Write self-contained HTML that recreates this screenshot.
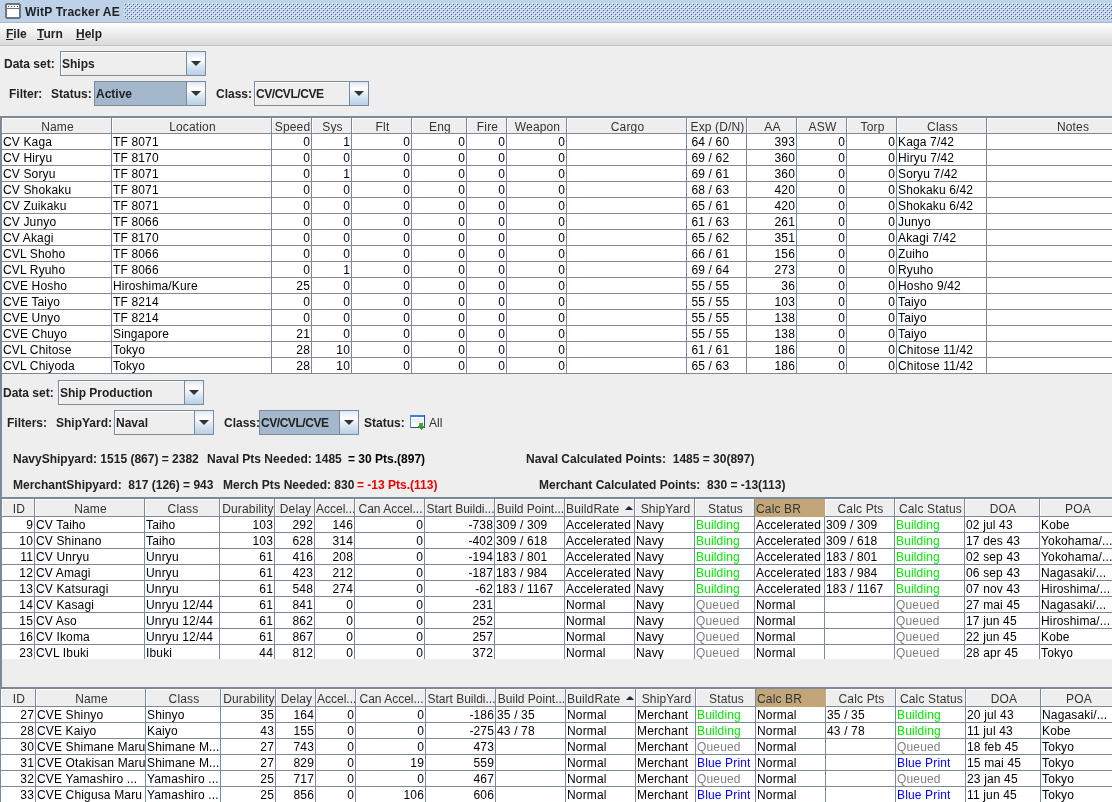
<!DOCTYPE html><html><head><meta charset="utf-8"><style>
*{margin:0;padding:0;box-sizing:content-box}
html,body{width:1112px;height:802px;overflow:hidden}
body{position:relative;background:#eeeeee;font-family:"Liberation Sans",sans-serif;font-size:12px;color:#000}
body div,body span{position:absolute;white-space:pre}
.clip{overflow:hidden}
#root{left:0;top:0;width:1112px;height:802px;will-change:transform}
#title{left:0;top:0;width:1112px;height:22px;background:#bdd1e9;border-bottom:1px solid #a9b9cc}
#title .tt{left:25px;top:2px;line-height:21px;letter-spacing:0.2px;font-weight:bold;color:#222;font-size:12px}
#title .ico{left:5px;top:3px;width:12px;height:12px;border:2px solid #6d7d8e;border-radius:2px;background:#fff}
#title .ico b{position:absolute;left:0;top:3px;width:12px;height:2px;background:#6d7d8e}
#title .bumps{left:124px;top:3px;width:988px;height:16px;background-image:radial-gradient(circle at 1.5px 1.5px,#5c6fa0 0.8px,transparent 1px),radial-gradient(circle at 3.5px 3.5px,#5c6fa0 0.8px,transparent 1px),radial-gradient(circle at 0.5px 0.5px,#fff 0.8px,transparent 1px),radial-gradient(circle at 2.5px 2.5px,#fff 0.8px,transparent 1px);background-size:4px 4px}
#menu{left:0;top:23px;width:1112px;height:22px;background:linear-gradient(#ffffff,#dadada);border-bottom:1px solid #c6c6c6}
#menu span{top:0px;line-height:23px;font-weight:bold;color:#222}
#menu u{text-decoration:underline}
.lb{font-weight:bold;color:#222;line-height:25px;padding-top:1px}
.lbn{color:#333;padding-top:1px}
.lb2{font-weight:bold;color:#222;line-height:14px;padding-top:1px}
.cb{border:1px solid #7a8a99;box-shadow:inset 1px 1px 0 #fff}
.cbt{left:1px;top:1px;line-height:23px;font-weight:bold;color:#222}
.cba{right:0;top:0;bottom:0;border-left:1px solid #7a8a99;background:linear-gradient(#dde8f3 0%,#ffffff 30%,#dde8f3 60%,#b8cfe5 100%)}
.cba i{position:absolute;left:4px;top:9px;width:0;height:0;border-left:5px solid transparent;border-right:5px solid transparent;border-top:5px solid #333}
.hd{color:#333;top:0;letter-spacing:0.15px}
.hd.c{text-align:center}
.td{line-height:15px;height:15px;letter-spacing:0.15px;overflow:hidden}
.sort{width:0;height:0;border-left:4px solid transparent;border-right:4px solid transparent;border-bottom:4px solid #1d2b3e}
.sico{width:13px;height:13px;border:1px solid #6a8ccf;background:linear-gradient(#c9daf0 0,#c9daf0 3px,#f6f9fd 3px)}
</style></head><body><div id="root"><div id="title"><svg width="16" height="16" style="position:absolute;left:5px;top:3px" shape-rendering="crispEdges"><path fill="#6b7584" d="M1 0h14v1h1v14h-1v1H1v-1H0V1h1z"/><rect x="2" y="2" width="12" height="12" fill="#fff"/><rect x="2" y="5" width="12" height="1" fill="#6b7584"/><rect x="3" y="3" width="1" height="1" fill="#555"/><rect x="6" y="3" width="1" height="1" fill="#555"/><rect x="9" y="3" width="1" height="1" fill="#555"/><rect x="12" y="3" width="1" height="1" fill="#555"/></svg><span class="tt">WitP Tracker AE</span><svg width="988" height="16" style="position:absolute;left:124px;top:3px" shape-rendering="crispEdges"><defs><pattern id="bp" width="4" height="4" patternUnits="userSpaceOnUse"><rect x="0" y="0" width="1" height="1" fill="#fff"/><rect x="2" y="2" width="1" height="1" fill="#fff"/><rect x="1" y="1" width="1" height="1" fill="#4f5f7a"/><rect x="3" y="3" width="1" height="1" fill="#4f5f7a"/></pattern><pattern id="bp2" width="4" height="4" patternUnits="userSpaceOnUse"><rect x="0" y="0" width="1" height="1" fill="#fff"/><rect x="2" y="2" width="1" height="1" fill="#fff"/><rect x="1" y="1" width="1" height="1" fill="#5560c0"/><rect x="3" y="3" width="1" height="1" fill="#5560c0"/></pattern></defs><rect width="988" height="16" fill="url(#bp)"/><rect x="4" y="4" width="984" height="8" fill="url(#bp2)"/></svg></div>
<div id="menu"><span style="left:6px"><u>F</u>ile</span><span style="left:37px"><u>T</u>urn</span><span style="left:76px"><u>H</u>elp</span></div>
<span class="lb" style="left:4px;top:51px;">Data set:</span>
<div class="cb" style="left:60px;top:51px;width:144px;height:23px;background:#eeeeee;"><span class="cbt" style="">Ships</span><div class="cba" style="width:18px"><i></i></div></div>
<span class="lb" style="left:9px;top:81px;">Filter:</span>
<span class="lb" style="left:51px;top:81px;">Status:</span>
<div class="cb" style="left:94px;top:81px;width:110px;height:23px;background:#a3b8cc;box-shadow:none"><span class="cbt" style="">Active</span><div class="cba" style="width:18px"><i></i></div></div>
<span class="lb" style="left:216px;top:81px;">Class:</span>
<div class="cb" style="left:254px;top:81px;width:113px;height:23px;background:#eeeeee;"><span class="cbt" style="letter-spacing:-0.45px">CV/CVL/CVE</span><div class="cba" style="width:18px"><i></i></div></div>
<div style="left:0px;top:116px;width:2px;height:571px;background:#7a8a99"></div>
<div style="left:0px;top:687px;width:1px;height:115px;background:#7a8a99"></div>
<div style="left:0px;top:116px;width:1112px;height:2px;background:#7a8a99"></div>
<div style="left:2px;top:118px;width:1110px;height:16px;background:#eeeeee"></div>
<div style="left:2px;top:118px;width:109px;height:1px;background:#fff"></div>
<div style="left:2px;top:118px;width:1px;height:15px;background:#fff"></div>
<span class="hd c" style="left:3px;width:109px;top:120px;height:15px;line-height:15px">Name</span>
<div style="left:111px;top:118px;width:1px;height:16px;background:#7a8a99"></div>
<div style="left:112px;top:118px;width:159px;height:1px;background:#fff"></div>
<div style="left:112px;top:118px;width:1px;height:15px;background:#fff"></div>
<span class="hd c" style="left:113px;width:159px;top:120px;height:15px;line-height:15px">Location</span>
<div style="left:271px;top:118px;width:1px;height:16px;background:#7a8a99"></div>
<div style="left:272px;top:118px;width:39px;height:1px;background:#fff"></div>
<div style="left:272px;top:118px;width:1px;height:15px;background:#fff"></div>
<span class="hd c" style="left:273px;width:39px;top:120px;height:15px;line-height:15px">Speed</span>
<div style="left:311px;top:118px;width:1px;height:16px;background:#7a8a99"></div>
<div style="left:312px;top:118px;width:39px;height:1px;background:#fff"></div>
<div style="left:312px;top:118px;width:1px;height:15px;background:#fff"></div>
<span class="hd c" style="left:313px;width:39px;top:120px;height:15px;line-height:15px">Sys</span>
<div style="left:351px;top:118px;width:1px;height:16px;background:#7a8a99"></div>
<div style="left:352px;top:118px;width:59px;height:1px;background:#fff"></div>
<div style="left:352px;top:118px;width:1px;height:15px;background:#fff"></div>
<span class="hd c" style="left:353px;width:59px;top:120px;height:15px;line-height:15px">Flt</span>
<div style="left:411px;top:118px;width:1px;height:16px;background:#7a8a99"></div>
<div style="left:412px;top:118px;width:54px;height:1px;background:#fff"></div>
<div style="left:412px;top:118px;width:1px;height:15px;background:#fff"></div>
<span class="hd c" style="left:413px;width:54px;top:120px;height:15px;line-height:15px">Eng</span>
<div style="left:466px;top:118px;width:1px;height:16px;background:#7a8a99"></div>
<div style="left:467px;top:118px;width:39px;height:1px;background:#fff"></div>
<div style="left:467px;top:118px;width:1px;height:15px;background:#fff"></div>
<span class="hd c" style="left:468px;width:39px;top:120px;height:15px;line-height:15px">Fire</span>
<div style="left:506px;top:118px;width:1px;height:16px;background:#7a8a99"></div>
<div style="left:507px;top:118px;width:59px;height:1px;background:#fff"></div>
<div style="left:507px;top:118px;width:1px;height:15px;background:#fff"></div>
<span class="hd c" style="left:508px;width:59px;top:120px;height:15px;line-height:15px">Weapon</span>
<div style="left:566px;top:118px;width:1px;height:16px;background:#7a8a99"></div>
<div style="left:567px;top:118px;width:119px;height:1px;background:#fff"></div>
<div style="left:567px;top:118px;width:1px;height:15px;background:#fff"></div>
<span class="hd c" style="left:568px;width:119px;top:120px;height:15px;line-height:15px">Cargo</span>
<div style="left:686px;top:118px;width:1px;height:16px;background:#7a8a99"></div>
<div style="left:687px;top:118px;width:59px;height:1px;background:#fff"></div>
<div style="left:687px;top:118px;width:1px;height:15px;background:#fff"></div>
<span class="hd c" style="left:688px;width:59px;top:120px;height:15px;line-height:15px">Exp (D/N)</span>
<div style="left:746px;top:118px;width:1px;height:16px;background:#7a8a99"></div>
<div style="left:747px;top:118px;width:49px;height:1px;background:#fff"></div>
<div style="left:747px;top:118px;width:1px;height:15px;background:#fff"></div>
<span class="hd c" style="left:748px;width:49px;top:120px;height:15px;line-height:15px">AA</span>
<div style="left:796px;top:118px;width:1px;height:16px;background:#7a8a99"></div>
<div style="left:797px;top:118px;width:49px;height:1px;background:#fff"></div>
<div style="left:797px;top:118px;width:1px;height:15px;background:#fff"></div>
<span class="hd c" style="left:798px;width:49px;top:120px;height:15px;line-height:15px">ASW</span>
<div style="left:846px;top:118px;width:1px;height:16px;background:#7a8a99"></div>
<div style="left:847px;top:118px;width:49px;height:1px;background:#fff"></div>
<div style="left:847px;top:118px;width:1px;height:15px;background:#fff"></div>
<span class="hd c" style="left:848px;width:49px;top:120px;height:15px;line-height:15px">Torp</span>
<div style="left:896px;top:118px;width:1px;height:16px;background:#7a8a99"></div>
<div style="left:897px;top:118px;width:89px;height:1px;background:#fff"></div>
<div style="left:897px;top:118px;width:1px;height:15px;background:#fff"></div>
<span class="hd c" style="left:898px;width:89px;top:120px;height:15px;line-height:15px">Class</span>
<div style="left:986px;top:118px;width:1px;height:16px;background:#7a8a99"></div>
<div style="left:987px;top:118px;width:170px;height:1px;background:#fff"></div>
<div style="left:987px;top:118px;width:1px;height:15px;background:#fff"></div>
<span class="hd c" style="left:988px;width:170px;top:120px;height:15px;line-height:15px">Notes</span>
<div style="left:2px;top:133px;width:1110px;height:1px;background:#7a8a99"></div>
<div style="left:2px;top:134px;width:1110px;height:240px;background:#fff"></div>
<div class="clip" style="left:0;top:134px;width:1112px;height:240px">
<span class="td" style="left:3px;width:108px;top:1px;">CV Kaga</span>
<span class="td" style="left:113px;width:158px;top:1px;">TF 8071</span>
<span class="td" style="left:272px;width:38px;text-align:right;top:1px;">0</span>
<span class="td" style="left:312px;width:38px;text-align:right;top:1px;">1</span>
<span class="td" style="left:352px;width:58px;text-align:right;top:1px;">0</span>
<span class="td" style="left:412px;width:53px;text-align:right;top:1px;">0</span>
<span class="td" style="left:467px;width:38px;text-align:right;top:1px;">0</span>
<span class="td" style="left:507px;width:58px;text-align:right;top:1px;">0</span>
<span class="td" style="left:688px;width:58px;top:1px;"> 64 / 60</span>
<span class="td" style="left:747px;width:48px;text-align:right;top:1px;">393</span>
<span class="td" style="left:797px;width:48px;text-align:right;top:1px;">0</span>
<span class="td" style="left:847px;width:48px;text-align:right;top:1px;">0</span>
<span class="td" style="left:898px;width:88px;top:1px;">Kaga 7/42</span>
<div style="left:2px;top:15px;width:1110px;height:1px;background:#7a8a99"></div>
<span class="td" style="left:3px;width:108px;top:17px;">CV Hiryu</span>
<span class="td" style="left:113px;width:158px;top:17px;">TF 8170</span>
<span class="td" style="left:272px;width:38px;text-align:right;top:17px;">0</span>
<span class="td" style="left:312px;width:38px;text-align:right;top:17px;">0</span>
<span class="td" style="left:352px;width:58px;text-align:right;top:17px;">0</span>
<span class="td" style="left:412px;width:53px;text-align:right;top:17px;">0</span>
<span class="td" style="left:467px;width:38px;text-align:right;top:17px;">0</span>
<span class="td" style="left:507px;width:58px;text-align:right;top:17px;">0</span>
<span class="td" style="left:688px;width:58px;top:17px;"> 69 / 62</span>
<span class="td" style="left:747px;width:48px;text-align:right;top:17px;">360</span>
<span class="td" style="left:797px;width:48px;text-align:right;top:17px;">0</span>
<span class="td" style="left:847px;width:48px;text-align:right;top:17px;">0</span>
<span class="td" style="left:898px;width:88px;top:17px;">Hiryu 7/42</span>
<div style="left:2px;top:31px;width:1110px;height:1px;background:#7a8a99"></div>
<span class="td" style="left:3px;width:108px;top:33px;">CV Soryu</span>
<span class="td" style="left:113px;width:158px;top:33px;">TF 8071</span>
<span class="td" style="left:272px;width:38px;text-align:right;top:33px;">0</span>
<span class="td" style="left:312px;width:38px;text-align:right;top:33px;">1</span>
<span class="td" style="left:352px;width:58px;text-align:right;top:33px;">0</span>
<span class="td" style="left:412px;width:53px;text-align:right;top:33px;">0</span>
<span class="td" style="left:467px;width:38px;text-align:right;top:33px;">0</span>
<span class="td" style="left:507px;width:58px;text-align:right;top:33px;">0</span>
<span class="td" style="left:688px;width:58px;top:33px;"> 69 / 61</span>
<span class="td" style="left:747px;width:48px;text-align:right;top:33px;">360</span>
<span class="td" style="left:797px;width:48px;text-align:right;top:33px;">0</span>
<span class="td" style="left:847px;width:48px;text-align:right;top:33px;">0</span>
<span class="td" style="left:898px;width:88px;top:33px;">Soryu 7/42</span>
<div style="left:2px;top:47px;width:1110px;height:1px;background:#7a8a99"></div>
<span class="td" style="left:3px;width:108px;top:49px;">CV Shokaku</span>
<span class="td" style="left:113px;width:158px;top:49px;">TF 8071</span>
<span class="td" style="left:272px;width:38px;text-align:right;top:49px;">0</span>
<span class="td" style="left:312px;width:38px;text-align:right;top:49px;">0</span>
<span class="td" style="left:352px;width:58px;text-align:right;top:49px;">0</span>
<span class="td" style="left:412px;width:53px;text-align:right;top:49px;">0</span>
<span class="td" style="left:467px;width:38px;text-align:right;top:49px;">0</span>
<span class="td" style="left:507px;width:58px;text-align:right;top:49px;">0</span>
<span class="td" style="left:688px;width:58px;top:49px;"> 68 / 63</span>
<span class="td" style="left:747px;width:48px;text-align:right;top:49px;">420</span>
<span class="td" style="left:797px;width:48px;text-align:right;top:49px;">0</span>
<span class="td" style="left:847px;width:48px;text-align:right;top:49px;">0</span>
<span class="td" style="left:898px;width:88px;top:49px;">Shokaku 6/42</span>
<div style="left:2px;top:63px;width:1110px;height:1px;background:#7a8a99"></div>
<span class="td" style="left:3px;width:108px;top:65px;">CV Zuikaku</span>
<span class="td" style="left:113px;width:158px;top:65px;">TF 8071</span>
<span class="td" style="left:272px;width:38px;text-align:right;top:65px;">0</span>
<span class="td" style="left:312px;width:38px;text-align:right;top:65px;">0</span>
<span class="td" style="left:352px;width:58px;text-align:right;top:65px;">0</span>
<span class="td" style="left:412px;width:53px;text-align:right;top:65px;">0</span>
<span class="td" style="left:467px;width:38px;text-align:right;top:65px;">0</span>
<span class="td" style="left:507px;width:58px;text-align:right;top:65px;">0</span>
<span class="td" style="left:688px;width:58px;top:65px;"> 65 / 61</span>
<span class="td" style="left:747px;width:48px;text-align:right;top:65px;">420</span>
<span class="td" style="left:797px;width:48px;text-align:right;top:65px;">0</span>
<span class="td" style="left:847px;width:48px;text-align:right;top:65px;">0</span>
<span class="td" style="left:898px;width:88px;top:65px;">Shokaku 6/42</span>
<div style="left:2px;top:79px;width:1110px;height:1px;background:#7a8a99"></div>
<span class="td" style="left:3px;width:108px;top:81px;">CV Junyo</span>
<span class="td" style="left:113px;width:158px;top:81px;">TF 8066</span>
<span class="td" style="left:272px;width:38px;text-align:right;top:81px;">0</span>
<span class="td" style="left:312px;width:38px;text-align:right;top:81px;">0</span>
<span class="td" style="left:352px;width:58px;text-align:right;top:81px;">0</span>
<span class="td" style="left:412px;width:53px;text-align:right;top:81px;">0</span>
<span class="td" style="left:467px;width:38px;text-align:right;top:81px;">0</span>
<span class="td" style="left:507px;width:58px;text-align:right;top:81px;">0</span>
<span class="td" style="left:688px;width:58px;top:81px;"> 61 / 63</span>
<span class="td" style="left:747px;width:48px;text-align:right;top:81px;">261</span>
<span class="td" style="left:797px;width:48px;text-align:right;top:81px;">0</span>
<span class="td" style="left:847px;width:48px;text-align:right;top:81px;">0</span>
<span class="td" style="left:898px;width:88px;top:81px;">Junyo</span>
<div style="left:2px;top:95px;width:1110px;height:1px;background:#7a8a99"></div>
<span class="td" style="left:3px;width:108px;top:97px;">CV Akagi</span>
<span class="td" style="left:113px;width:158px;top:97px;">TF 8170</span>
<span class="td" style="left:272px;width:38px;text-align:right;top:97px;">0</span>
<span class="td" style="left:312px;width:38px;text-align:right;top:97px;">0</span>
<span class="td" style="left:352px;width:58px;text-align:right;top:97px;">0</span>
<span class="td" style="left:412px;width:53px;text-align:right;top:97px;">0</span>
<span class="td" style="left:467px;width:38px;text-align:right;top:97px;">0</span>
<span class="td" style="left:507px;width:58px;text-align:right;top:97px;">0</span>
<span class="td" style="left:688px;width:58px;top:97px;"> 65 / 62</span>
<span class="td" style="left:747px;width:48px;text-align:right;top:97px;">351</span>
<span class="td" style="left:797px;width:48px;text-align:right;top:97px;">0</span>
<span class="td" style="left:847px;width:48px;text-align:right;top:97px;">0</span>
<span class="td" style="left:898px;width:88px;top:97px;">Akagi 7/42</span>
<div style="left:2px;top:111px;width:1110px;height:1px;background:#7a8a99"></div>
<span class="td" style="left:3px;width:108px;top:113px;">CVL Shoho</span>
<span class="td" style="left:113px;width:158px;top:113px;">TF 8066</span>
<span class="td" style="left:272px;width:38px;text-align:right;top:113px;">0</span>
<span class="td" style="left:312px;width:38px;text-align:right;top:113px;">0</span>
<span class="td" style="left:352px;width:58px;text-align:right;top:113px;">0</span>
<span class="td" style="left:412px;width:53px;text-align:right;top:113px;">0</span>
<span class="td" style="left:467px;width:38px;text-align:right;top:113px;">0</span>
<span class="td" style="left:507px;width:58px;text-align:right;top:113px;">0</span>
<span class="td" style="left:688px;width:58px;top:113px;"> 66 / 61</span>
<span class="td" style="left:747px;width:48px;text-align:right;top:113px;">156</span>
<span class="td" style="left:797px;width:48px;text-align:right;top:113px;">0</span>
<span class="td" style="left:847px;width:48px;text-align:right;top:113px;">0</span>
<span class="td" style="left:898px;width:88px;top:113px;">Zuiho</span>
<div style="left:2px;top:127px;width:1110px;height:1px;background:#7a8a99"></div>
<span class="td" style="left:3px;width:108px;top:129px;">CVL Ryuho</span>
<span class="td" style="left:113px;width:158px;top:129px;">TF 8066</span>
<span class="td" style="left:272px;width:38px;text-align:right;top:129px;">0</span>
<span class="td" style="left:312px;width:38px;text-align:right;top:129px;">1</span>
<span class="td" style="left:352px;width:58px;text-align:right;top:129px;">0</span>
<span class="td" style="left:412px;width:53px;text-align:right;top:129px;">0</span>
<span class="td" style="left:467px;width:38px;text-align:right;top:129px;">0</span>
<span class="td" style="left:507px;width:58px;text-align:right;top:129px;">0</span>
<span class="td" style="left:688px;width:58px;top:129px;"> 69 / 64</span>
<span class="td" style="left:747px;width:48px;text-align:right;top:129px;">273</span>
<span class="td" style="left:797px;width:48px;text-align:right;top:129px;">0</span>
<span class="td" style="left:847px;width:48px;text-align:right;top:129px;">0</span>
<span class="td" style="left:898px;width:88px;top:129px;">Ryuho</span>
<div style="left:2px;top:143px;width:1110px;height:1px;background:#7a8a99"></div>
<span class="td" style="left:3px;width:108px;top:145px;">CVE Hosho</span>
<span class="td" style="left:113px;width:158px;top:145px;">Hiroshima/Kure</span>
<span class="td" style="left:272px;width:38px;text-align:right;top:145px;">25</span>
<span class="td" style="left:312px;width:38px;text-align:right;top:145px;">0</span>
<span class="td" style="left:352px;width:58px;text-align:right;top:145px;">0</span>
<span class="td" style="left:412px;width:53px;text-align:right;top:145px;">0</span>
<span class="td" style="left:467px;width:38px;text-align:right;top:145px;">0</span>
<span class="td" style="left:507px;width:58px;text-align:right;top:145px;">0</span>
<span class="td" style="left:688px;width:58px;top:145px;"> 55 / 55</span>
<span class="td" style="left:747px;width:48px;text-align:right;top:145px;">36</span>
<span class="td" style="left:797px;width:48px;text-align:right;top:145px;">0</span>
<span class="td" style="left:847px;width:48px;text-align:right;top:145px;">0</span>
<span class="td" style="left:898px;width:88px;top:145px;">Hosho 9/42</span>
<div style="left:2px;top:159px;width:1110px;height:1px;background:#7a8a99"></div>
<span class="td" style="left:3px;width:108px;top:161px;">CVE Taiyo</span>
<span class="td" style="left:113px;width:158px;top:161px;">TF 8214</span>
<span class="td" style="left:272px;width:38px;text-align:right;top:161px;">0</span>
<span class="td" style="left:312px;width:38px;text-align:right;top:161px;">0</span>
<span class="td" style="left:352px;width:58px;text-align:right;top:161px;">0</span>
<span class="td" style="left:412px;width:53px;text-align:right;top:161px;">0</span>
<span class="td" style="left:467px;width:38px;text-align:right;top:161px;">0</span>
<span class="td" style="left:507px;width:58px;text-align:right;top:161px;">0</span>
<span class="td" style="left:688px;width:58px;top:161px;"> 55 / 55</span>
<span class="td" style="left:747px;width:48px;text-align:right;top:161px;">103</span>
<span class="td" style="left:797px;width:48px;text-align:right;top:161px;">0</span>
<span class="td" style="left:847px;width:48px;text-align:right;top:161px;">0</span>
<span class="td" style="left:898px;width:88px;top:161px;">Taiyo</span>
<div style="left:2px;top:175px;width:1110px;height:1px;background:#7a8a99"></div>
<span class="td" style="left:3px;width:108px;top:177px;">CVE Unyo</span>
<span class="td" style="left:113px;width:158px;top:177px;">TF 8214</span>
<span class="td" style="left:272px;width:38px;text-align:right;top:177px;">0</span>
<span class="td" style="left:312px;width:38px;text-align:right;top:177px;">0</span>
<span class="td" style="left:352px;width:58px;text-align:right;top:177px;">0</span>
<span class="td" style="left:412px;width:53px;text-align:right;top:177px;">0</span>
<span class="td" style="left:467px;width:38px;text-align:right;top:177px;">0</span>
<span class="td" style="left:507px;width:58px;text-align:right;top:177px;">0</span>
<span class="td" style="left:688px;width:58px;top:177px;"> 55 / 55</span>
<span class="td" style="left:747px;width:48px;text-align:right;top:177px;">138</span>
<span class="td" style="left:797px;width:48px;text-align:right;top:177px;">0</span>
<span class="td" style="left:847px;width:48px;text-align:right;top:177px;">0</span>
<span class="td" style="left:898px;width:88px;top:177px;">Taiyo</span>
<div style="left:2px;top:191px;width:1110px;height:1px;background:#7a8a99"></div>
<span class="td" style="left:3px;width:108px;top:193px;">CVE Chuyo</span>
<span class="td" style="left:113px;width:158px;top:193px;">Singapore</span>
<span class="td" style="left:272px;width:38px;text-align:right;top:193px;">21</span>
<span class="td" style="left:312px;width:38px;text-align:right;top:193px;">0</span>
<span class="td" style="left:352px;width:58px;text-align:right;top:193px;">0</span>
<span class="td" style="left:412px;width:53px;text-align:right;top:193px;">0</span>
<span class="td" style="left:467px;width:38px;text-align:right;top:193px;">0</span>
<span class="td" style="left:507px;width:58px;text-align:right;top:193px;">0</span>
<span class="td" style="left:688px;width:58px;top:193px;"> 55 / 55</span>
<span class="td" style="left:747px;width:48px;text-align:right;top:193px;">138</span>
<span class="td" style="left:797px;width:48px;text-align:right;top:193px;">0</span>
<span class="td" style="left:847px;width:48px;text-align:right;top:193px;">0</span>
<span class="td" style="left:898px;width:88px;top:193px;">Taiyo</span>
<div style="left:2px;top:207px;width:1110px;height:1px;background:#7a8a99"></div>
<span class="td" style="left:3px;width:108px;top:209px;">CVL Chitose</span>
<span class="td" style="left:113px;width:158px;top:209px;">Tokyo</span>
<span class="td" style="left:272px;width:38px;text-align:right;top:209px;">28</span>
<span class="td" style="left:312px;width:38px;text-align:right;top:209px;">10</span>
<span class="td" style="left:352px;width:58px;text-align:right;top:209px;">0</span>
<span class="td" style="left:412px;width:53px;text-align:right;top:209px;">0</span>
<span class="td" style="left:467px;width:38px;text-align:right;top:209px;">0</span>
<span class="td" style="left:507px;width:58px;text-align:right;top:209px;">0</span>
<span class="td" style="left:688px;width:58px;top:209px;"> 61 / 61</span>
<span class="td" style="left:747px;width:48px;text-align:right;top:209px;">186</span>
<span class="td" style="left:797px;width:48px;text-align:right;top:209px;">0</span>
<span class="td" style="left:847px;width:48px;text-align:right;top:209px;">0</span>
<span class="td" style="left:898px;width:88px;top:209px;">Chitose 11/42</span>
<div style="left:2px;top:223px;width:1110px;height:1px;background:#7a8a99"></div>
<span class="td" style="left:3px;width:108px;top:225px;">CVL Chiyoda</span>
<span class="td" style="left:113px;width:158px;top:225px;">Tokyo</span>
<span class="td" style="left:272px;width:38px;text-align:right;top:225px;">28</span>
<span class="td" style="left:312px;width:38px;text-align:right;top:225px;">10</span>
<span class="td" style="left:352px;width:58px;text-align:right;top:225px;">0</span>
<span class="td" style="left:412px;width:53px;text-align:right;top:225px;">0</span>
<span class="td" style="left:467px;width:38px;text-align:right;top:225px;">0</span>
<span class="td" style="left:507px;width:58px;text-align:right;top:225px;">0</span>
<span class="td" style="left:688px;width:58px;top:225px;"> 65 / 63</span>
<span class="td" style="left:747px;width:48px;text-align:right;top:225px;">186</span>
<span class="td" style="left:797px;width:48px;text-align:right;top:225px;">0</span>
<span class="td" style="left:847px;width:48px;text-align:right;top:225px;">0</span>
<span class="td" style="left:898px;width:88px;top:225px;">Chitose 11/42</span>
<div style="left:2px;top:239px;width:1110px;height:1px;background:#7a8a99"></div>
<div style="left:111px;top:0;width:1px;height:240px;background:#7a8a99"></div>
<div style="left:271px;top:0;width:1px;height:240px;background:#7a8a99"></div>
<div style="left:311px;top:0;width:1px;height:240px;background:#7a8a99"></div>
<div style="left:351px;top:0;width:1px;height:240px;background:#7a8a99"></div>
<div style="left:411px;top:0;width:1px;height:240px;background:#7a8a99"></div>
<div style="left:466px;top:0;width:1px;height:240px;background:#7a8a99"></div>
<div style="left:506px;top:0;width:1px;height:240px;background:#7a8a99"></div>
<div style="left:566px;top:0;width:1px;height:240px;background:#7a8a99"></div>
<div style="left:686px;top:0;width:1px;height:240px;background:#7a8a99"></div>
<div style="left:746px;top:0;width:1px;height:240px;background:#7a8a99"></div>
<div style="left:796px;top:0;width:1px;height:240px;background:#7a8a99"></div>
<div style="left:846px;top:0;width:1px;height:240px;background:#7a8a99"></div>
<div style="left:896px;top:0;width:1px;height:240px;background:#7a8a99"></div>
<div style="left:986px;top:0;width:1px;height:240px;background:#7a8a99"></div>
</div>
<span class="lb" style="left:3px;top:380px;">Data set:</span>
<div class="cb" style="left:58px;top:380px;width:144px;height:23px;background:#eeeeee;"><span class="cbt" style="">Ship Production</span><div class="cba" style="width:18px"><i></i></div></div>
<span class="lb" style="left:7px;top:410px;">Filters:</span>
<span class="lb" style="left:56px;top:410px;">ShipYard:</span>
<div class="cb" style="left:114px;top:410px;width:98px;height:23px;background:#eeeeee;"><span class="cbt" style="">Naval</span><div class="cba" style="width:18px"><i></i></div></div>
<span class="lb" style="left:224px;top:410px;">Class:</span>
<div class="cb" style="left:259px;top:410px;width:98px;height:23px;background:#a3b8cc;box-shadow:none"><span class="cbt" style="letter-spacing:-0.45px">CV/CVL/CVE</span><div class="cba" style="width:18px"><i></i></div></div>
<span class="lb" style="left:364px;top:410px;">Status:</span>
<svg width="16" height="16" style="position:absolute;left:410px;top:415px" shape-rendering="crispEdges"><rect x="0" y="0" width="15" height="13" fill="#2c4a9a"/><rect x="0" y="0" width="14" height="2" fill="#4a7ae0"/><rect x="0" y="2" width="1" height="11" fill="#5a86dc"/><rect x="1" y="2" width="13" height="10" fill="#fbfdff"/><rect x="2" y="4" width="11" height="1" fill="#dde6f0"/><rect x="2" y="6" width="11" height="1" fill="#f0e0d8"/><rect x="9" y="8" width="4" height="4" fill="#4caa32"/><path d="M7 11h8l-4 4z" fill="#3a9a28"/></svg>
<span class="lbn" style="left:429px;top:410px;line-height:25px">All</span>
<span class="lb2" style="left:13px;top:451px">NavyShipyard: 1515 (867) = 2382</span>
<span class="lb2" style="left:207px;top:451px">Naval Pts Needed: 1485</span>
<span class="lb2" style="left:348px;top:451px;color:#000">= 30 Pts.(897)</span>
<span class="lb2" style="left:526px;top:451px">Naval Calculated Points:&nbsp; 1485 = 30(897)</span>
<span class="lb2" style="left:13px;top:477px">MerchantShipyard:&nbsp; 817 (126) = 943</span>
<span class="lb2" style="left:223px;top:477px">Merch Pts Needed: 830</span>
<span class="lb2" style="left:357px;top:477px;color:#f00000">= -13 Pts.(113)</span>
<span class="lb2" style="left:539px;top:477px">Merchant Calculated Points:&nbsp; 830 = -13(113)</span>
<div style="left:0px;top:497px;width:1112px;height:2px;background:#7a8a99"></div>
<div style="left:2px;top:499px;width:1110px;height:18px;background:#eeeeee"></div>
<div style="left:2px;top:499px;width:32px;height:1px;background:#fff"></div>
<div style="left:2px;top:499px;width:1px;height:17px;background:#fff"></div>
<span class="hd c" style="left:3px;width:32px;top:501px;height:17px;line-height:17px">ID</span>
<div style="left:34px;top:499px;width:1px;height:18px;background:#7a8a99"></div>
<div style="left:35px;top:499px;width:109px;height:1px;background:#fff"></div>
<div style="left:35px;top:499px;width:1px;height:17px;background:#fff"></div>
<span class="hd c" style="left:36px;width:109px;top:501px;height:17px;line-height:17px">Name</span>
<div style="left:144px;top:499px;width:1px;height:18px;background:#7a8a99"></div>
<div style="left:145px;top:499px;width:74px;height:1px;background:#fff"></div>
<div style="left:145px;top:499px;width:1px;height:17px;background:#fff"></div>
<span class="hd c" style="left:146px;width:74px;top:501px;height:17px;line-height:17px">Class</span>
<div style="left:219px;top:499px;width:1px;height:18px;background:#7a8a99"></div>
<div style="left:220px;top:499px;width:54px;height:1px;background:#fff"></div>
<div style="left:220px;top:499px;width:1px;height:17px;background:#fff"></div>
<span class="hd c" style="left:221px;width:54px;top:501px;height:17px;line-height:17px">Durability</span>
<div style="left:274px;top:499px;width:1px;height:18px;background:#7a8a99"></div>
<div style="left:275px;top:499px;width:39px;height:1px;background:#fff"></div>
<div style="left:275px;top:499px;width:1px;height:17px;background:#fff"></div>
<span class="hd c" style="left:276px;width:39px;top:501px;height:17px;line-height:17px">Delay</span>
<div style="left:314px;top:499px;width:1px;height:18px;background:#7a8a99"></div>
<div style="left:315px;top:499px;width:39px;height:1px;background:#fff"></div>
<div style="left:315px;top:499px;width:1px;height:17px;background:#fff"></div>
<span class="hd c" style="letter-spacing:0;left:316px;width:39px;top:501px;height:17px;line-height:17px">Accel...</span>
<div style="left:354px;top:499px;width:1px;height:18px;background:#7a8a99"></div>
<div style="left:355px;top:499px;width:69px;height:1px;background:#fff"></div>
<div style="left:355px;top:499px;width:1px;height:17px;background:#fff"></div>
<span class="hd c" style="letter-spacing:0;left:356px;width:69px;top:501px;height:17px;line-height:17px">Can Accel...</span>
<div style="left:424px;top:499px;width:1px;height:18px;background:#7a8a99"></div>
<div style="left:425px;top:499px;width:69px;height:1px;background:#fff"></div>
<div style="left:425px;top:499px;width:1px;height:17px;background:#fff"></div>
<span class="hd c" style="letter-spacing:0;left:426px;width:69px;top:501px;height:17px;line-height:17px">Start Buildi...</span>
<div style="left:494px;top:499px;width:1px;height:18px;background:#7a8a99"></div>
<div style="left:495px;top:499px;width:69px;height:1px;background:#fff"></div>
<div style="left:495px;top:499px;width:1px;height:17px;background:#fff"></div>
<span class="hd c" style="letter-spacing:0;left:496px;width:69px;top:501px;height:17px;line-height:17px">Build Point...</span>
<div style="left:564px;top:499px;width:1px;height:18px;background:#7a8a99"></div>
<div style="left:565px;top:499px;width:69px;height:1px;background:#fff"></div>
<div style="left:565px;top:499px;width:1px;height:17px;background:#fff"></div>
<span class="hd" style="left:566px;top:501px;height:17px;line-height:17px">BuildRate</span>
<svg width="8" height="4" style="position:absolute;left:625px;top:506px"><path d="M0 4L3.2 0.4h1.6L8 4z" fill="#1d2b3e"/></svg>
<div style="left:634px;top:499px;width:1px;height:18px;background:#7a8a99"></div>
<div style="left:635px;top:499px;width:59px;height:1px;background:#fff"></div>
<div style="left:635px;top:499px;width:1px;height:17px;background:#fff"></div>
<span class="hd c" style="left:636px;width:59px;top:501px;height:17px;line-height:17px">ShipYard</span>
<div style="left:694px;top:499px;width:1px;height:18px;background:#7a8a99"></div>
<div style="left:695px;top:499px;width:59px;height:1px;background:#fff"></div>
<div style="left:695px;top:499px;width:1px;height:17px;background:#fff"></div>
<span class="hd c" style="left:696px;width:59px;top:501px;height:17px;line-height:17px">Status</span>
<div style="left:754px;top:499px;width:1px;height:18px;background:#7a8a99"></div>
<div style="left:824px;top:499px;width:1px;height:18px;background:#7a8a99"></div>
<div style="left:825px;top:499px;width:69px;height:1px;background:#fff"></div>
<div style="left:825px;top:499px;width:1px;height:17px;background:#fff"></div>
<span class="hd c" style="left:826px;width:69px;top:501px;height:17px;line-height:17px">Calc Pts</span>
<div style="left:894px;top:499px;width:1px;height:18px;background:#7a8a99"></div>
<div style="left:895px;top:499px;width:69px;height:1px;background:#fff"></div>
<div style="left:895px;top:499px;width:1px;height:17px;background:#fff"></div>
<span class="hd c" style="left:896px;width:69px;top:501px;height:17px;line-height:17px">Calc Status</span>
<div style="left:964px;top:499px;width:1px;height:18px;background:#7a8a99"></div>
<div style="left:965px;top:499px;width:74px;height:1px;background:#fff"></div>
<div style="left:965px;top:499px;width:1px;height:17px;background:#fff"></div>
<span class="hd c" style="left:966px;width:74px;top:501px;height:17px;line-height:17px">DOA</span>
<div style="left:1039px;top:499px;width:1px;height:18px;background:#7a8a99"></div>
<div style="left:1040px;top:499px;width:74px;height:1px;background:#fff"></div>
<div style="left:1040px;top:499px;width:1px;height:17px;background:#fff"></div>
<span class="hd c" style="left:1041px;width:74px;top:501px;height:17px;line-height:17px">POA</span>
<div style="left:2px;top:516px;width:1110px;height:1px;background:#7a8a99"></div>
<div style="left:755px;top:499px;width:70px;height:18px;background:#c2a67a"></div>
<span class="hd" style="left:756px;top:501px;height:17px;line-height:17px">Calc BR</span>
<div style="left:2px;top:517px;width:1110px;height:142px;background:#fff"></div>
<div class="clip" style="left:0;top:517px;width:1112px;height:142px">
<span class="td" style="left:2px;width:31px;text-align:right;top:1px;">9</span>
<span class="td" style="left:36px;width:108px;top:1px;">CV Taiho</span>
<span class="td" style="left:146px;width:73px;top:1px;">Taiho</span>
<span class="td" style="left:220px;width:53px;text-align:right;top:1px;">103</span>
<span class="td" style="left:275px;width:38px;text-align:right;top:1px;">292</span>
<span class="td" style="left:315px;width:38px;text-align:right;top:1px;">146</span>
<span class="td" style="left:355px;width:68px;text-align:right;top:1px;">0</span>
<span class="td" style="left:425px;width:68px;text-align:right;top:1px;">-738</span>
<span class="td" style="left:496px;width:68px;top:1px;">309 / 309</span>
<span class="td" style="left:566px;width:68px;top:1px;">Accelerated</span>
<span class="td" style="left:636px;width:58px;top:1px;">Navy</span>
<span class="td" style="left:696px;width:58px;top:1px;color:#00ee00;">Building</span>
<span class="td" style="left:756px;width:68px;top:1px;">Accelerated</span>
<span class="td" style="left:826px;width:68px;top:1px;">309 / 309</span>
<span class="td" style="left:896px;width:68px;top:1px;color:#00ee00;">Building</span>
<span class="td" style="left:966px;width:73px;top:1px;">02 jul 43</span>
<span class="td" style="left:1041px;width:73px;top:1px;">Kobe</span>
<div style="left:2px;top:15px;width:1110px;height:1px;background:#7a8a99"></div>
<span class="td" style="left:2px;width:31px;text-align:right;top:17px;">10</span>
<span class="td" style="left:36px;width:108px;top:17px;">CV Shinano</span>
<span class="td" style="left:146px;width:73px;top:17px;">Taiho</span>
<span class="td" style="left:220px;width:53px;text-align:right;top:17px;">103</span>
<span class="td" style="left:275px;width:38px;text-align:right;top:17px;">628</span>
<span class="td" style="left:315px;width:38px;text-align:right;top:17px;">314</span>
<span class="td" style="left:355px;width:68px;text-align:right;top:17px;">0</span>
<span class="td" style="left:425px;width:68px;text-align:right;top:17px;">-402</span>
<span class="td" style="left:496px;width:68px;top:17px;">309 / 618</span>
<span class="td" style="left:566px;width:68px;top:17px;">Accelerated</span>
<span class="td" style="left:636px;width:58px;top:17px;">Navy</span>
<span class="td" style="left:696px;width:58px;top:17px;color:#00ee00;">Building</span>
<span class="td" style="left:756px;width:68px;top:17px;">Accelerated</span>
<span class="td" style="left:826px;width:68px;top:17px;">309 / 618</span>
<span class="td" style="left:896px;width:68px;top:17px;color:#00ee00;">Building</span>
<span class="td" style="left:966px;width:73px;top:17px;">17 des 43</span>
<span class="td" style="left:1041px;width:73px;top:17px;">Yokohama/...</span>
<div style="left:2px;top:31px;width:1110px;height:1px;background:#7a8a99"></div>
<span class="td" style="left:2px;width:31px;text-align:right;top:33px;">11</span>
<span class="td" style="left:36px;width:108px;top:33px;">CV Unryu</span>
<span class="td" style="left:146px;width:73px;top:33px;">Unryu</span>
<span class="td" style="left:220px;width:53px;text-align:right;top:33px;">61</span>
<span class="td" style="left:275px;width:38px;text-align:right;top:33px;">416</span>
<span class="td" style="left:315px;width:38px;text-align:right;top:33px;">208</span>
<span class="td" style="left:355px;width:68px;text-align:right;top:33px;">0</span>
<span class="td" style="left:425px;width:68px;text-align:right;top:33px;">-194</span>
<span class="td" style="left:496px;width:68px;top:33px;">183 / 801</span>
<span class="td" style="left:566px;width:68px;top:33px;">Accelerated</span>
<span class="td" style="left:636px;width:58px;top:33px;">Navy</span>
<span class="td" style="left:696px;width:58px;top:33px;color:#00ee00;">Building</span>
<span class="td" style="left:756px;width:68px;top:33px;">Accelerated</span>
<span class="td" style="left:826px;width:68px;top:33px;">183 / 801</span>
<span class="td" style="left:896px;width:68px;top:33px;color:#00ee00;">Building</span>
<span class="td" style="left:966px;width:73px;top:33px;">02 sep 43</span>
<span class="td" style="left:1041px;width:73px;top:33px;">Yokohama/...</span>
<div style="left:2px;top:47px;width:1110px;height:1px;background:#7a8a99"></div>
<span class="td" style="left:2px;width:31px;text-align:right;top:49px;">12</span>
<span class="td" style="left:36px;width:108px;top:49px;">CV Amagi</span>
<span class="td" style="left:146px;width:73px;top:49px;">Unryu</span>
<span class="td" style="left:220px;width:53px;text-align:right;top:49px;">61</span>
<span class="td" style="left:275px;width:38px;text-align:right;top:49px;">423</span>
<span class="td" style="left:315px;width:38px;text-align:right;top:49px;">212</span>
<span class="td" style="left:355px;width:68px;text-align:right;top:49px;">0</span>
<span class="td" style="left:425px;width:68px;text-align:right;top:49px;">-187</span>
<span class="td" style="left:496px;width:68px;top:49px;">183 / 984</span>
<span class="td" style="left:566px;width:68px;top:49px;">Accelerated</span>
<span class="td" style="left:636px;width:58px;top:49px;">Navy</span>
<span class="td" style="left:696px;width:58px;top:49px;color:#00ee00;">Building</span>
<span class="td" style="left:756px;width:68px;top:49px;">Accelerated</span>
<span class="td" style="left:826px;width:68px;top:49px;">183 / 984</span>
<span class="td" style="left:896px;width:68px;top:49px;color:#00ee00;">Building</span>
<span class="td" style="left:966px;width:73px;top:49px;">06 sep 43</span>
<span class="td" style="left:1041px;width:73px;top:49px;">Nagasaki/...</span>
<div style="left:2px;top:63px;width:1110px;height:1px;background:#7a8a99"></div>
<span class="td" style="left:2px;width:31px;text-align:right;top:65px;">13</span>
<span class="td" style="left:36px;width:108px;top:65px;">CV Katsuragi</span>
<span class="td" style="left:146px;width:73px;top:65px;">Unryu</span>
<span class="td" style="left:220px;width:53px;text-align:right;top:65px;">61</span>
<span class="td" style="left:275px;width:38px;text-align:right;top:65px;">548</span>
<span class="td" style="left:315px;width:38px;text-align:right;top:65px;">274</span>
<span class="td" style="left:355px;width:68px;text-align:right;top:65px;">0</span>
<span class="td" style="left:425px;width:68px;text-align:right;top:65px;">-62</span>
<span class="td" style="left:496px;width:68px;top:65px;">183 / 1167</span>
<span class="td" style="left:566px;width:68px;top:65px;">Accelerated</span>
<span class="td" style="left:636px;width:58px;top:65px;">Navy</span>
<span class="td" style="left:696px;width:58px;top:65px;color:#00ee00;">Building</span>
<span class="td" style="left:756px;width:68px;top:65px;">Accelerated</span>
<span class="td" style="left:826px;width:68px;top:65px;">183 / 1167</span>
<span class="td" style="left:896px;width:68px;top:65px;color:#00ee00;">Building</span>
<span class="td" style="left:966px;width:73px;top:65px;">07 nov 43</span>
<span class="td" style="left:1041px;width:73px;top:65px;">Hiroshima/...</span>
<div style="left:2px;top:79px;width:1110px;height:1px;background:#7a8a99"></div>
<span class="td" style="left:2px;width:31px;text-align:right;top:81px;">14</span>
<span class="td" style="left:36px;width:108px;top:81px;">CV Kasagi</span>
<span class="td" style="left:146px;width:73px;top:81px;">Unryu 12/44</span>
<span class="td" style="left:220px;width:53px;text-align:right;top:81px;">61</span>
<span class="td" style="left:275px;width:38px;text-align:right;top:81px;">841</span>
<span class="td" style="left:315px;width:38px;text-align:right;top:81px;">0</span>
<span class="td" style="left:355px;width:68px;text-align:right;top:81px;">0</span>
<span class="td" style="left:425px;width:68px;text-align:right;top:81px;">231</span>
<span class="td" style="left:566px;width:68px;top:81px;">Normal</span>
<span class="td" style="left:636px;width:58px;top:81px;">Navy</span>
<span class="td" style="left:696px;width:58px;top:81px;color:#808080;">Queued</span>
<span class="td" style="left:756px;width:68px;top:81px;">Normal</span>
<span class="td" style="left:896px;width:68px;top:81px;color:#808080;">Queued</span>
<span class="td" style="left:966px;width:73px;top:81px;">27 mai 45</span>
<span class="td" style="left:1041px;width:73px;top:81px;">Nagasaki/...</span>
<div style="left:2px;top:95px;width:1110px;height:1px;background:#7a8a99"></div>
<span class="td" style="left:2px;width:31px;text-align:right;top:97px;">15</span>
<span class="td" style="left:36px;width:108px;top:97px;">CV Aso</span>
<span class="td" style="left:146px;width:73px;top:97px;">Unryu 12/44</span>
<span class="td" style="left:220px;width:53px;text-align:right;top:97px;">61</span>
<span class="td" style="left:275px;width:38px;text-align:right;top:97px;">862</span>
<span class="td" style="left:315px;width:38px;text-align:right;top:97px;">0</span>
<span class="td" style="left:355px;width:68px;text-align:right;top:97px;">0</span>
<span class="td" style="left:425px;width:68px;text-align:right;top:97px;">252</span>
<span class="td" style="left:566px;width:68px;top:97px;">Normal</span>
<span class="td" style="left:636px;width:58px;top:97px;">Navy</span>
<span class="td" style="left:696px;width:58px;top:97px;color:#808080;">Queued</span>
<span class="td" style="left:756px;width:68px;top:97px;">Normal</span>
<span class="td" style="left:896px;width:68px;top:97px;color:#808080;">Queued</span>
<span class="td" style="left:966px;width:73px;top:97px;">17 jun 45</span>
<span class="td" style="left:1041px;width:73px;top:97px;">Hiroshima/...</span>
<div style="left:2px;top:111px;width:1110px;height:1px;background:#7a8a99"></div>
<span class="td" style="left:2px;width:31px;text-align:right;top:113px;">16</span>
<span class="td" style="left:36px;width:108px;top:113px;">CV Ikoma</span>
<span class="td" style="left:146px;width:73px;top:113px;">Unryu 12/44</span>
<span class="td" style="left:220px;width:53px;text-align:right;top:113px;">61</span>
<span class="td" style="left:275px;width:38px;text-align:right;top:113px;">867</span>
<span class="td" style="left:315px;width:38px;text-align:right;top:113px;">0</span>
<span class="td" style="left:355px;width:68px;text-align:right;top:113px;">0</span>
<span class="td" style="left:425px;width:68px;text-align:right;top:113px;">257</span>
<span class="td" style="left:566px;width:68px;top:113px;">Normal</span>
<span class="td" style="left:636px;width:58px;top:113px;">Navy</span>
<span class="td" style="left:696px;width:58px;top:113px;color:#808080;">Queued</span>
<span class="td" style="left:756px;width:68px;top:113px;">Normal</span>
<span class="td" style="left:896px;width:68px;top:113px;color:#808080;">Queued</span>
<span class="td" style="left:966px;width:73px;top:113px;">22 jun 45</span>
<span class="td" style="left:1041px;width:73px;top:113px;">Kobe</span>
<div style="left:2px;top:127px;width:1110px;height:1px;background:#7a8a99"></div>
<span class="td" style="left:2px;width:31px;text-align:right;top:129px;">23</span>
<span class="td" style="left:36px;width:108px;top:129px;">CVL Ibuki</span>
<span class="td" style="left:146px;width:73px;top:129px;">Ibuki</span>
<span class="td" style="left:220px;width:53px;text-align:right;top:129px;">44</span>
<span class="td" style="left:275px;width:38px;text-align:right;top:129px;">812</span>
<span class="td" style="left:315px;width:38px;text-align:right;top:129px;">0</span>
<span class="td" style="left:355px;width:68px;text-align:right;top:129px;">0</span>
<span class="td" style="left:425px;width:68px;text-align:right;top:129px;">372</span>
<span class="td" style="left:566px;width:68px;top:129px;">Normal</span>
<span class="td" style="left:636px;width:58px;top:129px;">Navy</span>
<span class="td" style="left:696px;width:58px;top:129px;color:#808080;">Queued</span>
<span class="td" style="left:756px;width:68px;top:129px;">Normal</span>
<span class="td" style="left:896px;width:68px;top:129px;color:#808080;">Queued</span>
<span class="td" style="left:966px;width:73px;top:129px;">28 apr 45</span>
<span class="td" style="left:1041px;width:73px;top:129px;">Tokyo</span>
<div style="left:2px;top:143px;width:1110px;height:1px;background:#7a8a99"></div>
<div style="left:34px;top:0;width:1px;height:142px;background:#7a8a99"></div>
<div style="left:144px;top:0;width:1px;height:142px;background:#7a8a99"></div>
<div style="left:219px;top:0;width:1px;height:142px;background:#7a8a99"></div>
<div style="left:274px;top:0;width:1px;height:142px;background:#7a8a99"></div>
<div style="left:314px;top:0;width:1px;height:142px;background:#7a8a99"></div>
<div style="left:354px;top:0;width:1px;height:142px;background:#7a8a99"></div>
<div style="left:424px;top:0;width:1px;height:142px;background:#7a8a99"></div>
<div style="left:494px;top:0;width:1px;height:142px;background:#7a8a99"></div>
<div style="left:564px;top:0;width:1px;height:142px;background:#7a8a99"></div>
<div style="left:634px;top:0;width:1px;height:142px;background:#7a8a99"></div>
<div style="left:694px;top:0;width:1px;height:142px;background:#7a8a99"></div>
<div style="left:754px;top:0;width:1px;height:142px;background:#7a8a99"></div>
<div style="left:824px;top:0;width:1px;height:142px;background:#7a8a99"></div>
<div style="left:894px;top:0;width:1px;height:142px;background:#7a8a99"></div>
<div style="left:964px;top:0;width:1px;height:142px;background:#7a8a99"></div>
<div style="left:1039px;top:0;width:1px;height:142px;background:#7a8a99"></div>
</div>
<div style="left:0px;top:687px;width:1112px;height:2px;background:#7a8a99"></div>
<div style="left:1px;top:689px;width:1111px;height:18px;background:#eeeeee"></div>
<div style="left:1px;top:689px;width:34px;height:1px;background:#fff"></div>
<div style="left:1px;top:689px;width:1px;height:17px;background:#fff"></div>
<span class="hd c" style="left:2px;width:34px;top:691px;height:17px;line-height:17px">ID</span>
<div style="left:35px;top:689px;width:1px;height:18px;background:#7a8a99"></div>
<div style="left:36px;top:689px;width:109px;height:1px;background:#fff"></div>
<div style="left:36px;top:689px;width:1px;height:17px;background:#fff"></div>
<span class="hd c" style="left:37px;width:109px;top:691px;height:17px;line-height:17px">Name</span>
<div style="left:145px;top:689px;width:1px;height:18px;background:#7a8a99"></div>
<div style="left:146px;top:689px;width:74px;height:1px;background:#fff"></div>
<div style="left:146px;top:689px;width:1px;height:17px;background:#fff"></div>
<span class="hd c" style="left:147px;width:74px;top:691px;height:17px;line-height:17px">Class</span>
<div style="left:220px;top:689px;width:1px;height:18px;background:#7a8a99"></div>
<div style="left:221px;top:689px;width:54px;height:1px;background:#fff"></div>
<div style="left:221px;top:689px;width:1px;height:17px;background:#fff"></div>
<span class="hd c" style="left:222px;width:54px;top:691px;height:17px;line-height:17px">Durability</span>
<div style="left:275px;top:689px;width:1px;height:18px;background:#7a8a99"></div>
<div style="left:276px;top:689px;width:39px;height:1px;background:#fff"></div>
<div style="left:276px;top:689px;width:1px;height:17px;background:#fff"></div>
<span class="hd c" style="left:277px;width:39px;top:691px;height:17px;line-height:17px">Delay</span>
<div style="left:315px;top:689px;width:1px;height:18px;background:#7a8a99"></div>
<div style="left:316px;top:689px;width:39px;height:1px;background:#fff"></div>
<div style="left:316px;top:689px;width:1px;height:17px;background:#fff"></div>
<span class="hd c" style="letter-spacing:0;left:317px;width:39px;top:691px;height:17px;line-height:17px">Accel...</span>
<div style="left:355px;top:689px;width:1px;height:18px;background:#7a8a99"></div>
<div style="left:356px;top:689px;width:69px;height:1px;background:#fff"></div>
<div style="left:356px;top:689px;width:1px;height:17px;background:#fff"></div>
<span class="hd c" style="letter-spacing:0;left:357px;width:69px;top:691px;height:17px;line-height:17px">Can Accel...</span>
<div style="left:425px;top:689px;width:1px;height:18px;background:#7a8a99"></div>
<div style="left:426px;top:689px;width:69px;height:1px;background:#fff"></div>
<div style="left:426px;top:689px;width:1px;height:17px;background:#fff"></div>
<span class="hd c" style="letter-spacing:0;left:427px;width:69px;top:691px;height:17px;line-height:17px">Start Buildi...</span>
<div style="left:495px;top:689px;width:1px;height:18px;background:#7a8a99"></div>
<div style="left:496px;top:689px;width:69px;height:1px;background:#fff"></div>
<div style="left:496px;top:689px;width:1px;height:17px;background:#fff"></div>
<span class="hd c" style="letter-spacing:0;left:497px;width:69px;top:691px;height:17px;line-height:17px">Build Point...</span>
<div style="left:565px;top:689px;width:1px;height:18px;background:#7a8a99"></div>
<div style="left:566px;top:689px;width:69px;height:1px;background:#fff"></div>
<div style="left:566px;top:689px;width:1px;height:17px;background:#fff"></div>
<span class="hd" style="left:567px;top:691px;height:17px;line-height:17px">BuildRate</span>
<svg width="8" height="4" style="position:absolute;left:626px;top:696px"><path d="M0 4L3.2 0.4h1.6L8 4z" fill="#1d2b3e"/></svg>
<div style="left:635px;top:689px;width:1px;height:18px;background:#7a8a99"></div>
<div style="left:636px;top:689px;width:59px;height:1px;background:#fff"></div>
<div style="left:636px;top:689px;width:1px;height:17px;background:#fff"></div>
<span class="hd c" style="left:637px;width:59px;top:691px;height:17px;line-height:17px">ShipYard</span>
<div style="left:695px;top:689px;width:1px;height:18px;background:#7a8a99"></div>
<div style="left:696px;top:689px;width:59px;height:1px;background:#fff"></div>
<div style="left:696px;top:689px;width:1px;height:17px;background:#fff"></div>
<span class="hd c" style="left:697px;width:59px;top:691px;height:17px;line-height:17px">Status</span>
<div style="left:755px;top:689px;width:1px;height:18px;background:#7a8a99"></div>
<div style="left:825px;top:689px;width:1px;height:18px;background:#7a8a99"></div>
<div style="left:826px;top:689px;width:69px;height:1px;background:#fff"></div>
<div style="left:826px;top:689px;width:1px;height:17px;background:#fff"></div>
<span class="hd c" style="left:827px;width:69px;top:691px;height:17px;line-height:17px">Calc Pts</span>
<div style="left:895px;top:689px;width:1px;height:18px;background:#7a8a99"></div>
<div style="left:896px;top:689px;width:69px;height:1px;background:#fff"></div>
<div style="left:896px;top:689px;width:1px;height:17px;background:#fff"></div>
<span class="hd c" style="left:897px;width:69px;top:691px;height:17px;line-height:17px">Calc Status</span>
<div style="left:965px;top:689px;width:1px;height:18px;background:#7a8a99"></div>
<div style="left:966px;top:689px;width:74px;height:1px;background:#fff"></div>
<div style="left:966px;top:689px;width:1px;height:17px;background:#fff"></div>
<span class="hd c" style="left:967px;width:74px;top:691px;height:17px;line-height:17px">DOA</span>
<div style="left:1040px;top:689px;width:1px;height:18px;background:#7a8a99"></div>
<div style="left:1041px;top:689px;width:74px;height:1px;background:#fff"></div>
<div style="left:1041px;top:689px;width:1px;height:17px;background:#fff"></div>
<span class="hd c" style="left:1042px;width:74px;top:691px;height:17px;line-height:17px">POA</span>
<div style="left:1px;top:706px;width:1111px;height:1px;background:#7a8a99"></div>
<div style="left:756px;top:689px;width:70px;height:18px;background:#c2a67a"></div>
<span class="hd" style="left:757px;top:691px;height:17px;line-height:17px">Calc BR</span>
<div style="left:1px;top:707px;width:1111px;height:96px;background:#fff"></div>
<div class="clip" style="left:0;top:707px;width:1112px;height:96px">
<span class="td" style="left:1px;width:33px;text-align:right;top:1px;">27</span>
<span class="td" style="left:37px;width:108px;top:1px;">CVE Shinyo</span>
<span class="td" style="left:147px;width:73px;top:1px;">Shinyo</span>
<span class="td" style="left:221px;width:53px;text-align:right;top:1px;">35</span>
<span class="td" style="left:276px;width:38px;text-align:right;top:1px;">164</span>
<span class="td" style="left:316px;width:38px;text-align:right;top:1px;">0</span>
<span class="td" style="left:356px;width:68px;text-align:right;top:1px;">0</span>
<span class="td" style="left:426px;width:68px;text-align:right;top:1px;">-186</span>
<span class="td" style="left:497px;width:68px;top:1px;">35 / 35</span>
<span class="td" style="left:567px;width:68px;top:1px;">Normal</span>
<span class="td" style="left:637px;width:58px;top:1px;">Merchant</span>
<span class="td" style="left:697px;width:58px;top:1px;color:#00ee00;">Building</span>
<span class="td" style="left:757px;width:68px;top:1px;">Normal</span>
<span class="td" style="left:827px;width:68px;top:1px;">35 / 35</span>
<span class="td" style="left:897px;width:68px;top:1px;color:#00ee00;">Building</span>
<span class="td" style="left:967px;width:73px;top:1px;">20 jul 43</span>
<span class="td" style="left:1042px;width:73px;top:1px;">Nagasaki/...</span>
<div style="left:1px;top:15px;width:1111px;height:1px;background:#7a8a99"></div>
<span class="td" style="left:1px;width:33px;text-align:right;top:17px;">28</span>
<span class="td" style="left:37px;width:108px;top:17px;">CVE Kaiyo</span>
<span class="td" style="left:147px;width:73px;top:17px;">Kaiyo</span>
<span class="td" style="left:221px;width:53px;text-align:right;top:17px;">43</span>
<span class="td" style="left:276px;width:38px;text-align:right;top:17px;">155</span>
<span class="td" style="left:316px;width:38px;text-align:right;top:17px;">0</span>
<span class="td" style="left:356px;width:68px;text-align:right;top:17px;">0</span>
<span class="td" style="left:426px;width:68px;text-align:right;top:17px;">-275</span>
<span class="td" style="left:497px;width:68px;top:17px;">43 / 78</span>
<span class="td" style="left:567px;width:68px;top:17px;">Normal</span>
<span class="td" style="left:637px;width:58px;top:17px;">Merchant</span>
<span class="td" style="left:697px;width:58px;top:17px;color:#00ee00;">Building</span>
<span class="td" style="left:757px;width:68px;top:17px;">Normal</span>
<span class="td" style="left:827px;width:68px;top:17px;">43 / 78</span>
<span class="td" style="left:897px;width:68px;top:17px;color:#00ee00;">Building</span>
<span class="td" style="left:967px;width:73px;top:17px;">11 jul 43</span>
<span class="td" style="left:1042px;width:73px;top:17px;">Kobe</span>
<div style="left:1px;top:31px;width:1111px;height:1px;background:#7a8a99"></div>
<span class="td" style="left:1px;width:33px;text-align:right;top:33px;">30</span>
<span class="td" style="left:37px;width:108px;top:33px;">CVE Shimane Maru</span>
<span class="td" style="left:147px;width:73px;top:33px;">Shimane M...</span>
<span class="td" style="left:221px;width:53px;text-align:right;top:33px;">27</span>
<span class="td" style="left:276px;width:38px;text-align:right;top:33px;">743</span>
<span class="td" style="left:316px;width:38px;text-align:right;top:33px;">0</span>
<span class="td" style="left:356px;width:68px;text-align:right;top:33px;">0</span>
<span class="td" style="left:426px;width:68px;text-align:right;top:33px;">473</span>
<span class="td" style="left:567px;width:68px;top:33px;">Normal</span>
<span class="td" style="left:637px;width:58px;top:33px;">Merchant</span>
<span class="td" style="left:697px;width:58px;top:33px;color:#808080;">Queued</span>
<span class="td" style="left:757px;width:68px;top:33px;">Normal</span>
<span class="td" style="left:897px;width:68px;top:33px;color:#808080;">Queued</span>
<span class="td" style="left:967px;width:73px;top:33px;">18 feb 45</span>
<span class="td" style="left:1042px;width:73px;top:33px;">Tokyo</span>
<div style="left:1px;top:47px;width:1111px;height:1px;background:#7a8a99"></div>
<span class="td" style="left:1px;width:33px;text-align:right;top:49px;">31</span>
<span class="td" style="left:37px;width:108px;top:49px;">CVE Otakisan Maru</span>
<span class="td" style="left:147px;width:73px;top:49px;">Shimane M...</span>
<span class="td" style="left:221px;width:53px;text-align:right;top:49px;">27</span>
<span class="td" style="left:276px;width:38px;text-align:right;top:49px;">829</span>
<span class="td" style="left:316px;width:38px;text-align:right;top:49px;">0</span>
<span class="td" style="left:356px;width:68px;text-align:right;top:49px;">19</span>
<span class="td" style="left:426px;width:68px;text-align:right;top:49px;">559</span>
<span class="td" style="left:567px;width:68px;top:49px;">Normal</span>
<span class="td" style="left:637px;width:58px;top:49px;">Merchant</span>
<span class="td" style="left:697px;width:58px;top:49px;color:#0000ff;">Blue Print</span>
<span class="td" style="left:757px;width:68px;top:49px;">Normal</span>
<span class="td" style="left:897px;width:68px;top:49px;color:#0000ff;">Blue Print</span>
<span class="td" style="left:967px;width:73px;top:49px;">15 mai 45</span>
<span class="td" style="left:1042px;width:73px;top:49px;">Tokyo</span>
<div style="left:1px;top:63px;width:1111px;height:1px;background:#7a8a99"></div>
<span class="td" style="left:1px;width:33px;text-align:right;top:65px;">32</span>
<span class="td" style="left:37px;width:108px;top:65px;">CVE Yamashiro ...</span>
<span class="td" style="left:147px;width:73px;top:65px;">Yamashiro ...</span>
<span class="td" style="left:221px;width:53px;text-align:right;top:65px;">25</span>
<span class="td" style="left:276px;width:38px;text-align:right;top:65px;">717</span>
<span class="td" style="left:316px;width:38px;text-align:right;top:65px;">0</span>
<span class="td" style="left:356px;width:68px;text-align:right;top:65px;">0</span>
<span class="td" style="left:426px;width:68px;text-align:right;top:65px;">467</span>
<span class="td" style="left:567px;width:68px;top:65px;">Normal</span>
<span class="td" style="left:637px;width:58px;top:65px;">Merchant</span>
<span class="td" style="left:697px;width:58px;top:65px;color:#808080;">Queued</span>
<span class="td" style="left:757px;width:68px;top:65px;">Normal</span>
<span class="td" style="left:897px;width:68px;top:65px;color:#808080;">Queued</span>
<span class="td" style="left:967px;width:73px;top:65px;">23 jan 45</span>
<span class="td" style="left:1042px;width:73px;top:65px;">Tokyo</span>
<div style="left:1px;top:79px;width:1111px;height:1px;background:#7a8a99"></div>
<span class="td" style="left:1px;width:33px;text-align:right;top:81px;">33</span>
<span class="td" style="left:37px;width:108px;top:81px;">CVE Chigusa Maru</span>
<span class="td" style="left:147px;width:73px;top:81px;">Yamashiro ...</span>
<span class="td" style="left:221px;width:53px;text-align:right;top:81px;">25</span>
<span class="td" style="left:276px;width:38px;text-align:right;top:81px;">856</span>
<span class="td" style="left:316px;width:38px;text-align:right;top:81px;">0</span>
<span class="td" style="left:356px;width:68px;text-align:right;top:81px;">106</span>
<span class="td" style="left:426px;width:68px;text-align:right;top:81px;">606</span>
<span class="td" style="left:567px;width:68px;top:81px;">Normal</span>
<span class="td" style="left:637px;width:58px;top:81px;">Merchant</span>
<span class="td" style="left:697px;width:58px;top:81px;color:#0000ff;">Blue Print</span>
<span class="td" style="left:757px;width:68px;top:81px;">Normal</span>
<span class="td" style="left:897px;width:68px;top:81px;color:#0000ff;">Blue Print</span>
<span class="td" style="left:967px;width:73px;top:81px;">11 jun 45</span>
<span class="td" style="left:1042px;width:73px;top:81px;">Tokyo</span>
<div style="left:1px;top:95px;width:1111px;height:1px;background:#7a8a99"></div>
<div style="left:35px;top:0;width:1px;height:96px;background:#7a8a99"></div>
<div style="left:145px;top:0;width:1px;height:96px;background:#7a8a99"></div>
<div style="left:220px;top:0;width:1px;height:96px;background:#7a8a99"></div>
<div style="left:275px;top:0;width:1px;height:96px;background:#7a8a99"></div>
<div style="left:315px;top:0;width:1px;height:96px;background:#7a8a99"></div>
<div style="left:355px;top:0;width:1px;height:96px;background:#7a8a99"></div>
<div style="left:425px;top:0;width:1px;height:96px;background:#7a8a99"></div>
<div style="left:495px;top:0;width:1px;height:96px;background:#7a8a99"></div>
<div style="left:565px;top:0;width:1px;height:96px;background:#7a8a99"></div>
<div style="left:635px;top:0;width:1px;height:96px;background:#7a8a99"></div>
<div style="left:695px;top:0;width:1px;height:96px;background:#7a8a99"></div>
<div style="left:755px;top:0;width:1px;height:96px;background:#7a8a99"></div>
<div style="left:825px;top:0;width:1px;height:96px;background:#7a8a99"></div>
<div style="left:895px;top:0;width:1px;height:96px;background:#7a8a99"></div>
<div style="left:965px;top:0;width:1px;height:96px;background:#7a8a99"></div>
<div style="left:1040px;top:0;width:1px;height:96px;background:#7a8a99"></div>
</div></div></body></html>
